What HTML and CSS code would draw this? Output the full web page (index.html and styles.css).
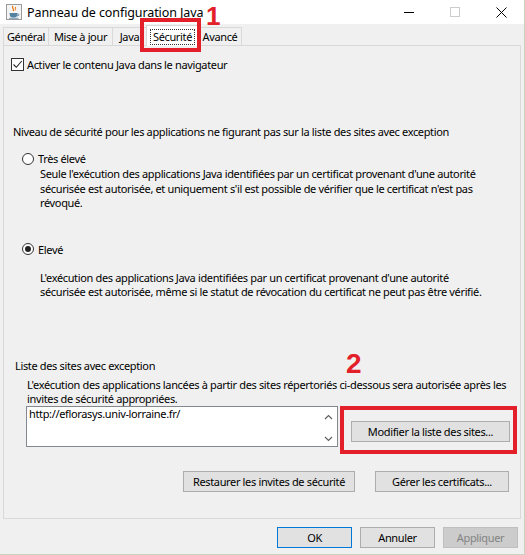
FILE: index.html
```html
<!DOCTYPE html>
<html lang="fr">
<head>
    <meta charset="UTF-8">
    <title>Panneau de configuration Java</title>
    <link rel="stylesheet" href="styles.css">
</head>
<body>
    <div class="window">
        <div class="titlebar">
            <svg class="app-icon" width="16" height="16" viewBox="0 0 16 16">
                <rect x="0.5" y="0.5" width="15" height="15" fill="#f4f4f4" stroke="#9a9a9a"/>
                <path d="M7 2 C5 4 9 5 7 7" fill="none" stroke="#e76f00" stroke-width="1.2"/>
                <path d="M9.5 3 C8.5 4.5 10.5 5 9 6.5" fill="none" stroke="#e76f00" stroke-width="1"/>
                <path d="M3.5 9 L11.5 9 L11 12 C10.5 13.2 9 13.5 7.5 13.5 C6 13.5 4.5 13.2 4 12 Z" fill="#5382a1"/>
                <path d="M11.3 9.8 C13.5 9.6 13.5 12 11 11.8" fill="none" stroke="#5382a1" stroke-width="1"/>
                <path d="M3 14.3 L12.5 14.3" stroke="#5382a1" stroke-width="0.8"/>
            </svg>
            <span class="title">Panneau de configuration Java</span>
            <div class="win-controls">
                <div class="win-btn">
                    <svg width="10" height="10" viewBox="0 0 10 10"><path d="M0 5.5 L10 5.5" stroke="#000"/></svg>
                </div>
                <div class="win-btn">
                    <svg width="10" height="10" viewBox="0 0 10 10"><rect x="0.5" y="0.5" width="9" height="9" fill="none" stroke="#cccccc"/></svg>
                </div>
                <div class="win-btn">
                    <svg width="11" height="11" viewBox="0 0 11 11"><path d="M0.5 0.5 L10.5 10.5 M10.5 0.5 L0.5 10.5" stroke="#000"/></svg>
                </div>
            </div>
        </div>

        <div class="tabs">
            <div class="tab tab-general">Général</div>
            <div class="tab tab-update">Mise à jour</div>
            <div class="tab tab-java">Java</div>
            <div class="tab tab-security selected"><span class="focus">Sécurité</span></div>
            <div class="tab tab-advanced">Avancé</div>
        </div>

        <div class="pane">
            <div class="check-row">
                <span class="checkbox">
                    <svg width="11" height="11" viewBox="0 0 11 11"><path d="M1.5 5.5 L4.3 8.3 L9.8 2" fill="none" stroke="#222" stroke-width="1.1"/></svg>
                </span>
                <span>Activer le contenu Java dans le navigateur</span>
            </div>

            <div class="level-title">Niveau de sécurité pour les applications ne figurant pas sur la liste des sites avec exception</div>

            <div class="radio-row first">
                <span class="radio"></span>
                <span>Très élevé</span>
            </div>
            <p class="desc">Seule l'exécution des applications Java identifiées par un certificat provenant d'une autorité<br>sécurisée est autorisée, et uniquement s'il est possible de vérifier que le certificat n'est pas<br>révoqué.</p>

            <div class="radio-row second">
                <span class="radio checked"></span>
                <span>Elevé</span>
            </div>
            <p class="desc desc-high">L'exécution des applications Java identifiées par un certificat provenant d'une autorité<br>sécurisée est autorisée, même si le statut de révocation du certificat ne peut pas être vérifié.</p>

            <div class="sites-title">Liste des sites avec exception</div>
            <p class="sites-desc">L'exécution des applications lancées à partir des sites répertoriés ci-dessous sera autorisée après les<br>invites de sécurité appropriées.</p>

            <div class="sites-row">
                <div class="sites-list">
                    <div class="sites-text">http://eflorasys.univ-lorraine.fr/</div>
                    <div class="scroll">
                        <svg width="9" height="6" viewBox="0 0 9 6"><path d="M1 5 L4.5 1.5 L8 5" fill="none" stroke="#606060" stroke-width="1.2"/></svg>
                        <svg width="9" height="6" viewBox="0 0 9 6"><path d="M1 1 L4.5 4.5 L8 1" fill="none" stroke="#606060" stroke-width="1.2"/></svg>
                    </div>
                </div>
                <button class="btn edit-btn">Modifier la liste des sites...</button>
            </div>

            <div class="actions-row">
                <button class="btn restore-btn">Restaurer les invites de sécurité</button>
                <button class="btn cert-btn">Gérer les certificats...</button>
            </div>
        </div>

        <div class="footer">
            <button class="btn dlg-btn default">OK</button>
            <button class="btn dlg-btn">Annuler</button>
            <button class="btn dlg-btn disabled">Appliquer</button>
        </div>

        <!-- annotations -->
        <div class="mark mark-tab"></div>
        <div class="mark-num num-1">1</div>
        <div class="mark mark-edit"></div>
        <div class="mark-num num-2">2</div>
    </div>
</body>
</html>
```

FILE: styles.css
```css
* {
    box-sizing: border-box;
}
body {
    margin: 0;
    font-family: "Noto Sans", sans-serif;
    font-size: 11px;
    letter-spacing: -0.35px;
    color: #000;
    background-color: #f0f0f0;
}
.window {
    position: relative;
    width: 525px;
    height: 555px;
    display: flex;
    flex-direction: column;
    background-color: #f0f0f0;
    border-right: 1px solid #c9d1bf;
    border-bottom: 1px solid #c9d1bf;
    overflow: hidden;
}
.titlebar {
    height: 24px;
    background-color: #fff;
    display: flex;
    align-items: center;
    padding-left: 6px;
}
.app-icon {
    margin-right: 5px;
}
.title {
    flex: 1;
    font-size: 12.5px;
    letter-spacing: -0.1px;
}
.win-controls {
    display: flex;
}
.win-btn {
    width: 46px;
    height: 24px;
    display: flex;
    align-items: center;
    justify-content: center;
}
.tabs {
    height: 21px;
    display: flex;
    align-items: flex-end;
    padding-left: 3px;
}
.tab {
    height: 18px;
    line-height: 17px;
    text-align: center;
    border: 1px solid #d9d9d9;
    border-bottom: none;
    margin-right: -1px;
    background-color: #f0f0f0;
}
.tab-general {
    width: 46px;
}
.tab-update {
    width: 65px;
}
.tab-java {
    width: 35px;
}
.tab-security {
    width: 53px;
}
.tab-advanced {
    width: 44px;
}
.tab.selected {
    height: 21px;
    margin-bottom: -1px;
    position: relative;
    background-color: #fff;
    padding-top: 2px;
}
.focus {
    display: inline-block;
    padding: 0 2px;
    line-height: 14px;
    outline: 1px dotted #333;
}
.pane {
    flex: 1;
    margin: 0 3px;
    border: 1px solid #d9d9d9;
    background-color: #f0f0f0;
    display: flex;
    flex-direction: column;
}
.check-row {
    display: flex;
    align-items: center;
    height: 15px;
    margin: 11px 0 0 7px;
}
.checkbox {
    width: 13px;
    height: 13px;
    border: 1px solid #333;
    background-color: #fff;
    display: flex;
    align-items: center;
    justify-content: center;
    margin-right: 3px;
}
.level-title {
    line-height: 15px;
    margin: 52px 0 0 9px;
}
.radio-row {
    display: flex;
    align-items: center;
    height: 15px;
    margin-left: 18px;
}
.radio-row.first {
    margin-top: 12px;
}
.radio-row.second {
    margin-top: 31px;
}
.radio {
    width: 12px;
    height: 12px;
    border: 1px solid #333;
    border-radius: 50%;
    background-color: #fff;
    margin-right: 4px;
    display: flex;
    align-items: center;
    justify-content: center;
}
.radio.checked::after {
    content: "";
    width: 6px;
    height: 6px;
    border-radius: 50%;
    background-color: #222;
}
.desc {
    margin: 1px 4px 0 36px;
    line-height: 14.5px;
}
.desc-high {
    margin-top: 14px;
}
.sites-title {
    line-height: 15px;
    margin: 58px 0 0 11px;
}
.sites-desc {
    margin: 5px 4px 0 23px;
    line-height: 14px;
}
.sites-row {
    display: flex;
    align-items: flex-start;
    margin: 0 0 0 22px;
}
.sites-list {
    width: 312px;
    height: 41px;
    border: 1px solid #828790;
    background-color: #fff;
    display: flex;
}
.sites-text {
    flex: 1;
    padding: 0 2px;
    line-height: 13px;
}
.scroll {
    width: 17px;
    display: flex;
    flex-direction: column;
    justify-content: space-between;
    align-items: center;
    padding: 7px 0 4px;
}
.btn {
    font-family: inherit;
    font-size: 11px;
    letter-spacing: -0.35px;
    color: #000;
    background-color: #e1e1e1;
    border: 1px solid #adadad;
    height: 21px;
    padding: 0;
    margin: 0;
}
.edit-btn {
    width: 159px;
    margin: 15px 0 0 13px;
}
.actions-row {
    display: flex;
    justify-content: flex-end;
    gap: 20px;
    margin-top: 24px;
    padding-right: 11px;
}
.restore-btn {
    width: 172px;
}
.cert-btn {
    width: 134px;
}
.footer {
    height: 35px;
    display: flex;
    justify-content: flex-end;
    gap: 8px;
    padding: 8px 6px 0 0;
}
.dlg-btn {
    width: 75px;
}
.dlg-btn.default {
    border-color: #0078d7;
}
.dlg-btn.disabled {
    background-color: #cccccc;
    border-color: #bfbfbf;
    color: #838383;
}
.mark {
    position: absolute;
    border: 4px solid #e3202a;
}
.mark-tab {
    left: 140px;
    top: 18px;
    width: 61px;
    height: 34px;
}
.mark-edit {
    left: 340px;
    top: 406px;
    width: 177px;
    height: 48px;
}
.mark-num {
    position: absolute;
    font-family: "Liberation Sans", sans-serif;
    font-weight: bold;
    color: #e3202a;
    letter-spacing: 0;
}
.num-1 {
    left: 206px;
    top: 6px;
    font-size: 26px;
    line-height: 20px;
}
.num-2 {
    left: 346px;
    top: 355px;
    font-size: 28px;
    line-height: 18px;
}
```
